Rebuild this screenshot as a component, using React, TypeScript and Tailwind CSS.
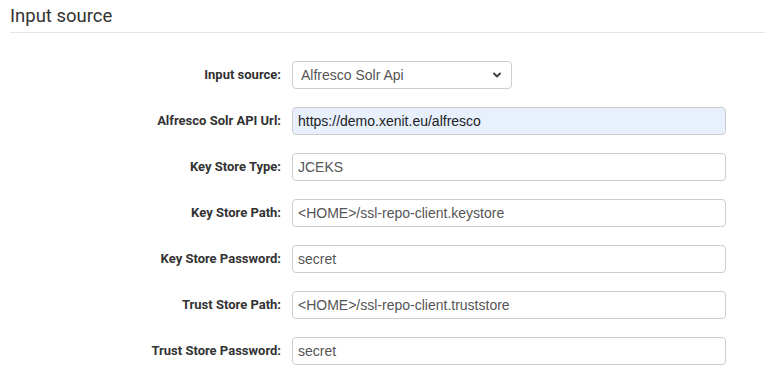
import { ChevronDown } from "lucide-react"

const rows = [
  { label: "Alfresco Solr API Url:", value: "https://demo.xenit.eu/alfresco", filled: true },
  { label: "Key Store Type:", value: "JCEKS" },
  { label: "Key Store Path:", value: "<HOME>/ssl-repo-client.keystore" },
  { label: "Key Store Password:", value: "secret" },
  { label: "Trust Store Path:", value: "<HOME>/ssl-repo-client.truststore" },
  { label: "Trust Store Password:", value: "secret" },
]

function App() {
  return (
    <div className="w-[765px] h-[383px] bg-white overflow-hidden font-['Liberation_Sans',sans-serif]">
      <div className="pl-[10px]">
        <h2 className="text-[18.5px] leading-[24px] pt-[4px] text-[#333] font-['Roboto',sans-serif] font-normal">Input source</h2>
        <div className="mt-[4px] h-px bg-[#e5e5e5]" />
      </div>

      <div className="flex flex-col gap-[18px] pt-[28px]">
        <div className="flex items-center">
          <label className="w-[281px] text-right text-[13px] font-bold text-[#333] font-['Roboto',sans-serif]">Input source:</label>
          <div className="ml-[11px] w-[220px] h-[28px] border border-[#ccc] rounded-[4px] flex items-center justify-between pl-[8px] pr-[8px] text-[14px] text-[#555]">
            <span>Alfresco Solr Api</span>
            <ChevronDown size={12} strokeWidth={4} className="text-[#444]" />
          </div>
        </div>

        {rows.map((r) => (
          <div key={r.label} className="flex items-center">
            <label className="w-[281px] text-right text-[13px] font-bold text-[#333] font-['Roboto',sans-serif]">{r.label}</label>
            <div className={`ml-[11px] w-[434px] h-[28px] border border-[#ccc] rounded-[4px] flex items-center pl-[5px] text-[14px] ${r.filled ? "bg-[#e8f0fe] text-[#222]" : "bg-white text-[#555]"}`}>
              {r.value}
            </div>
          </div>
        ))}
      </div>
    </div>
  )
}

export default App
